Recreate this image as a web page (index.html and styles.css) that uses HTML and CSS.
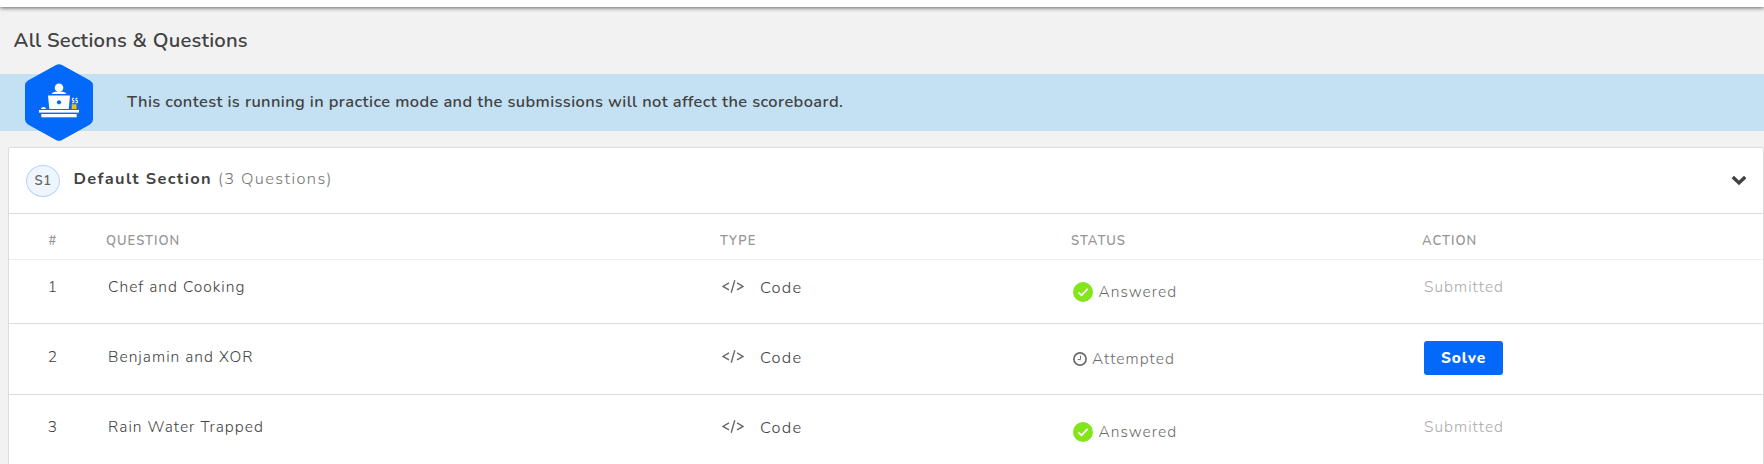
FILE: index.html
```html
<!DOCTYPE html>
<html lang="en">
<head>
<meta charset="utf-8">
<title>All Sections &amp; Questions</title>
<link rel="stylesheet" href="styles.css">
</head>
<body>
<svg width="0" height="0" class="defs">
  <symbol id="code" viewBox="0 0 22 13"><path d="M7 2.9 1 6.4 7 9.9M15 2.9 21 6.4 15 9.9M12.8.3 9.2 12.7" fill="none" stroke="#6a6a6a" stroke-width="1.4"/></symbol>
  <symbol id="check" viewBox="0 0 20 20"><circle cx="10" cy="10" r="10" fill="#82e61a"/><path d="M5.5 10.4 8.5 13.3 14.7 6.8" fill="none" stroke="#fff" stroke-width="1.8"/></symbol>
  <symbol id="clock" viewBox="0 0 14 14"><circle cx="7" cy="7" r="6.1" fill="none" stroke="#6b6b6f" stroke-width="1.7"/><path d="M7.5 3.5V7.5H4.7" fill="none" stroke="#77777b" stroke-width="1"/></symbol>
</svg>
<div class="topbar"></div>
<h1 class="title">All Sections &amp; Questions</h1>
<div class="banner">
  <svg class="hex" width="68" height="77" viewBox="0 0 68 77">
    <path d="M31 1Q34-.7 37 1L65 16.5Q68 18.3 68 21.5V55.5Q68 58.7 65 60.5L37 76Q34 77.7 31 76L3 60.5Q0 58.7 0 55.5V21.5Q0 18.3 3 16.5Z" fill="#0269fa"/>
    <g fill="#fff">
      <circle cx="34" cy="23.7" r="4.3"/>
      <path d="M26.5 30Q27.5 28 30 27.7H38Q40.5 28 41.5 30Z"/>
      <path d="M23 31.5H45L43.8 45H24.3Z"/>
      <path d="M16 45Q16.3 43 18.5 43T21 45Z"/>
      <rect x="14" y="46" width="40" height="2.6"/>
      <rect x="16.3" y="50" width="35.4" height="3.3"/>
    </g>
    <circle cx="34" cy="38.3" r="2.1" fill="#0269fa"/>
    <rect x="46.7" y="40.3" width="4.8" height="4.8" fill="#f5bc12"/>
    <path d="M49 34.3H47.4V36.5H48.9V38.7H47M52.5 34.3H50.9V36.5H52.4V38.7H50.5" fill="none" stroke="#fff" stroke-width="1"/>
  </svg>
  <p>This contest is running in practice mode and the submissions will not affect the scoreboard.</p>
</div>
<main class="card">
  <header class="section">
    <span class="badge">S1</span>
    <span class="name">Default Section</span>
    <span class="count">(3 Questions)</span>
    <svg class="chevron" width="16" height="11" viewBox="0 0 16 11"><path d="M1.8 2 8 8 14.2 2" fill="none" stroke="#424242" stroke-width="3.4"/></svg>
  </header>
  <div class="grid head">
    <span class="num">#</span><span>QUESTION</span><span class="wide">TYPE</span><span class="wide">STATUS</span><span class="wide">ACTION</span>
  </div>
  <div class="grid row first">
    <span class="num">1</span>
    <span class="question">Chef and Cooking</span>
    <span class="type"><svg width="22" height="13"><use href="#code"/></svg><span>Code</span></span>
    <span class="status"><svg width="20" height="20"><use href="#check"/></svg><span>Answered</span></span>
    <span class="action">Submitted</span>
  </div>
  <div class="grid row second">
    <span class="num">2</span>
    <span class="question">Benjamin and XOR</span>
    <span class="type"><svg width="22" height="13"><use href="#code"/></svg><span>Code</span></span>
    <span class="status pending"><svg width="14" height="14"><use href="#clock"/></svg><span>Attempted</span></span>
    <button class="solve">Solve</button>
  </div>
  <div class="grid row third">
    <span class="num">3</span>
    <span class="question">Rain Water Trapped</span>
    <span class="type"><svg width="22" height="13"><use href="#code"/></svg><span>Code</span></span>
    <span class="status"><svg width="20" height="20"><use href="#check"/></svg><span>Answered</span></span>
    <span class="action">Submitted</span>
  </div>
</main>
</body>
</html>
```
FILE: styles.css
```css
* { box-sizing: border-box; }
body {
  margin: 0;
  height: 464px;
  overflow: hidden;
  display: flex;
  flex-direction: column;
  background: #f2f2f2;
  color: #424242;
  font-family: Nunito, "Open Sans", "Noto Sans", sans-serif;
  font-size: 15.5px;
  letter-spacing: 1.03px;
  line-height: 20px;
  white-space: nowrap;
}
.defs { display: none; }
svg { flex: none; display: block; }
.topbar { flex: none; height: 7px; background: #fff; box-shadow: 0 1px 4px rgba(0,0,0,.6); }
.title { flex: none; height: 67px; margin: 0; padding: 19px 0 0 13.5px; font-size: 20.3px; letter-spacing: .2px; line-height: 28px; font-weight: 600; }
.banner { flex: none; height: 57px; background: #c4e1f4; display: flex; align-items: center; padding-left: 25px; gap: 34px; }
.hex { margin: -10px 0; }
.banner p { margin: 0 0 2px; font-size: 16.4px; letter-spacing: .39px; font-weight: 600; }
.card { flex: none; height: 330px; margin: 16px 0 0 8px; background: #fff; border: 1px solid #dcdcdc; border-radius: 2px 2px 0 0; }
.section { height: 66px; border-bottom: 1px solid #dcdcdc; display: flex; padding: 17px 16.5px 0 17px; font-size: 16.4px; }
.section > span { margin-top: -3px; line-height: 34px; }
.section .badge { width: 34px; height: 32px; margin: 0 13.5px 0 0; border: 1px solid #b4d3fb; border-radius: 50%; background: #eff5fd; text-align: center; line-height: 30px; font-size: 13px; letter-spacing: .5px; font-weight: 600; color: #666; }
.name { font-weight: 700; letter-spacing: 1.35px; margin-right: 6px; }
.count { color: #777; font-weight: 300; letter-spacing: 1.4px; }
.chevron { margin: 9.5px 0 0 auto; }
.grid { display: grid; grid-template-columns: 88px 611px 351px 351px 1fr; align-items: start; }
.head { height: 46px; border-bottom: 1px solid #efefef; font-size: 13px; letter-spacing: 1px; font-weight: 600; color: #969696; padding-top: 17px; }
.head > span { padding-left: 9px; }
.head .wide { padding-left: 12px; }
.num, .head .num { padding: 0; text-align: center; }
.row { border-bottom: 1px solid #dcdcdc; font-weight: 300; }
.first { height: 64px; padding-top: 17px; }
.second { height: 71px; padding-top: 23px; }
.third { height: 70px; padding-top: 22px; }
.question { padding-left: 11px; }
.type { display: flex; gap: 16px; padding: 3px 0 0 14px; }
.type > span { margin-top: -2px; font-size: 16.4px; letter-spacing: 1.2px; }
.status { display: flex; gap: 5.5px; padding: 5px 0 0 14px; color: #6c6c6c; }
.pending { gap: 5px; }
.pending > span { margin-top: -3px; }
.action { padding-left: 14px; color: #aaa; }
.solve { width: 79px; height: 34px; margin: -6px 0 0 14px; padding: 0; border: 0; border-radius: 3px; background: #0269fa; color: #fff; font: 800 15.5px/32px Nunito, "Open Sans", "Noto Sans", sans-serif; letter-spacing: .9px; }
```
